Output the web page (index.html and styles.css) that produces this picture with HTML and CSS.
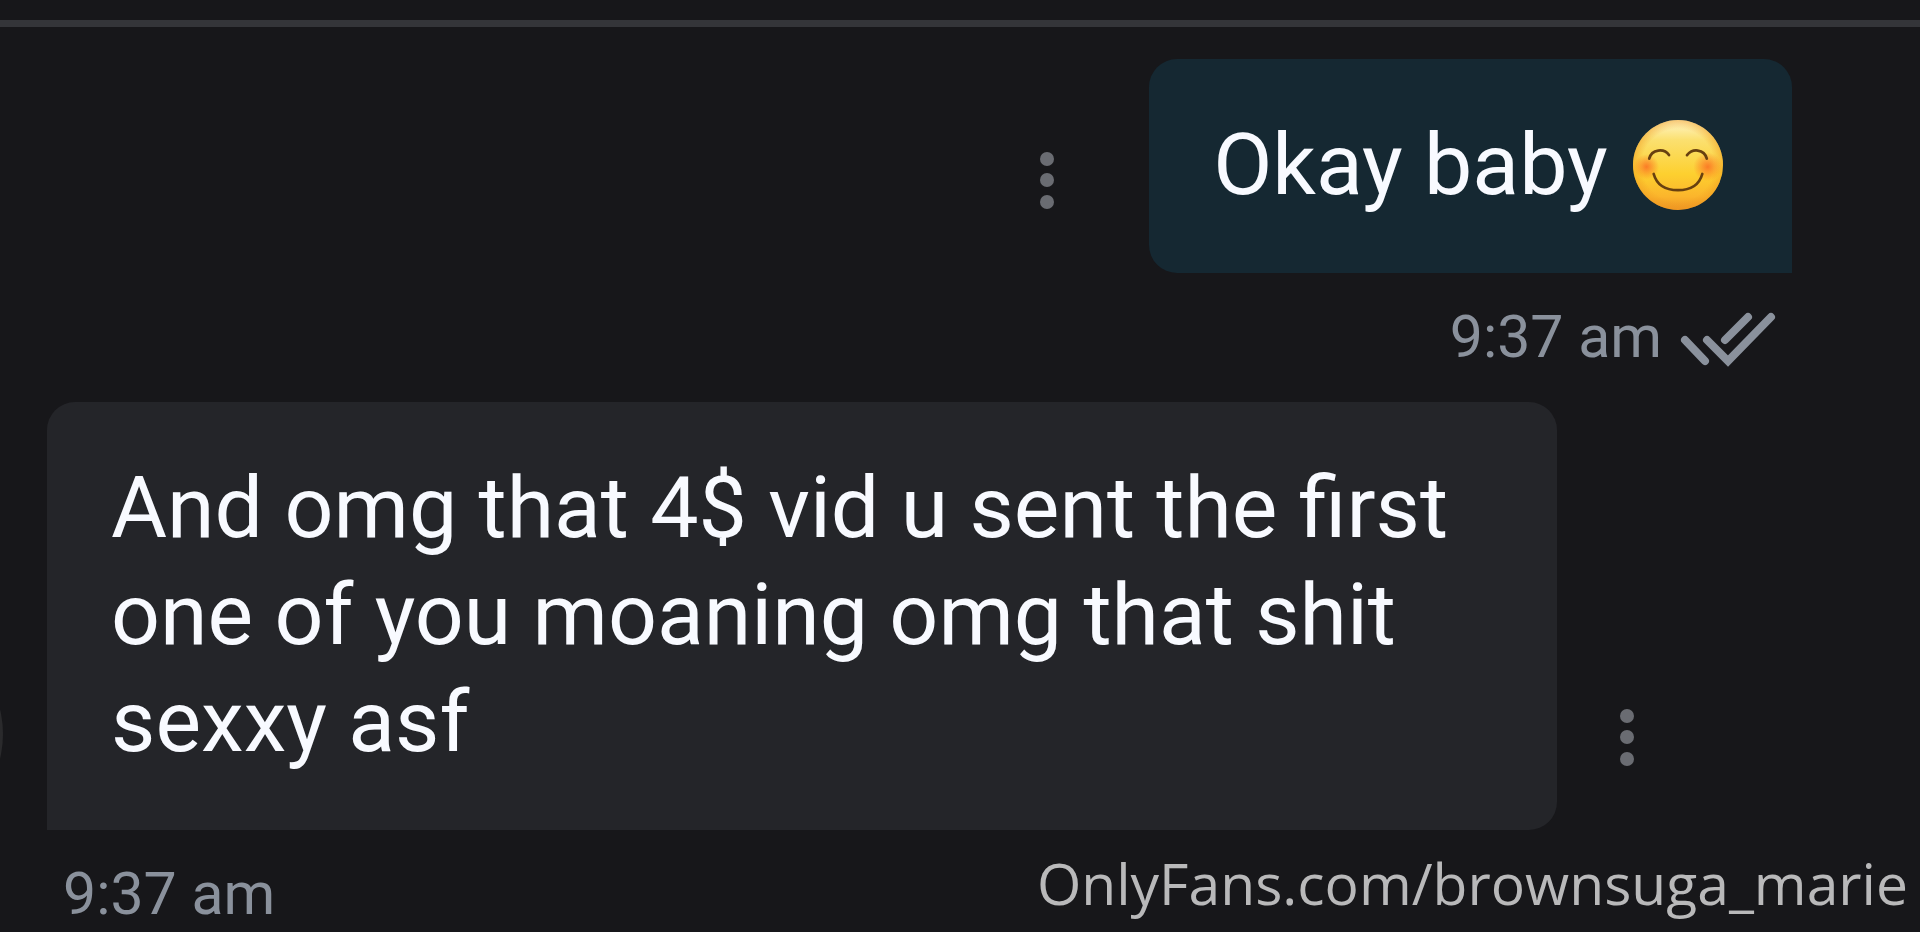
FILE: index.html
```
<!DOCTYPE html>
<html lang="en">
<head>
    <meta charset="UTF-8">
    <meta name="viewport" content="width=device-width, initial-scale=1.0">
    <title>Messages</title>
    <link rel="stylesheet" href="styles.css">
</head>
<body>
    <header class="topbar"></header>

    <main class="chat">
        <article class="message sent">
            <div class="row">
                <button class="menu" type="button" aria-label="Message options">
                    <svg viewBox="0 0 40 64"><circle cx="20" cy="11" r="7"/><circle cx="20" cy="32" r="7"/><circle cx="20" cy="54" r="7"/></svg>
                </button>
                <p class="bubble">Okay baby
                    <svg class="emoji" viewBox="0 0 100 100" role="img" aria-label="smiling face">
                        <defs>
                            <linearGradient id="face" x1="0" y1="0" x2="0" y2="1">
                                <stop offset="0" stop-color="#fff6cc"/>
                                <stop offset="0.22" stop-color="#fbe070"/>
                                <stop offset="0.6" stop-color="#fdd02f"/>
                                <stop offset="0.85" stop-color="#fbb52c"/>
                                <stop offset="1" stop-color="#ee9424"/>
                            </linearGradient>
                            <radialGradient id="edge">
                                <stop offset="0.8" stop-color="#f09a20" stop-opacity="0"/>
                                <stop offset="1" stop-color="#f09a20" stop-opacity="0.5"/>
                            </radialGradient>
                            <radialGradient id="cheek">
                                <stop offset="0" stop-color="#fb7324" stop-opacity="0.9"/>
                                <stop offset="1" stop-color="#fb7324" stop-opacity="0"/>
                            </radialGradient>
                        </defs>
                        <circle cx="50" cy="50" r="50" fill="url(#face)"/>
                        <circle cx="50" cy="50" r="50" fill="url(#edge)"/>
                        <circle cx="15" cy="52" r="14" fill="url(#cheek)"/>
                        <circle cx="83" cy="52" r="16" fill="url(#cheek)"/>
                        <g fill="none" stroke="#684010" stroke-width="3" stroke-linecap="round">
                            <path d="M18 43 Q20 35 28 34 Q36 33 40 39"/>
                            <path d="M60 39 Q65 33 72 34 Q80 35 82 43"/>
                            <path d="M23 60 Q28 78 50 78 Q72 78 77 60"/>
                        </g>
                    </svg>
                </p>
            </div>
            <div class="meta">
                <time>9:37 am</time>
                <svg class="ticks" viewBox="0 0 96 60" role="img" aria-label="Read">
                    <path d="M5 33 L25 54 M27 33 L48 54 L91 10 M68 10 L45 33"/>
                </svg>
            </div>
        </article>

        <article class="message received">
            <div class="row">
                <span class="avatar"></span>
                <p class="bubble">And omg that 4$ vid u sent the first one of you moaning omg that shit sexxy asf</p>
                <button class="menu" type="button" aria-label="Message options">
                    <svg viewBox="0 0 40 64"><circle cx="20" cy="11" r="7"/><circle cx="20" cy="32" r="7"/><circle cx="20" cy="54" r="7"/></svg>
                </button>
            </div>
            <div class="meta">
                <time>9:37 am</time>
            </div>
        </article>
    </main>

    <div class="watermark">OnlyFans.com/brownsuga_marie</div>
</body>
</html>
```
FILE: styles.css
```
* {
    box-sizing: border-box;
}
body {
    margin: 0;
    min-height: 100vh;
    position: relative;
    overflow: hidden;
    background-color: #17171a;
    color: #f8faff;
    font-family: Roboto, sans-serif;
}
.topbar {
    height: 27px;
    border-bottom: 7px solid #343539;
}
.chat {
    display: flex;
    flex-direction: column;
    gap: 31px;
    padding-top: 32px;
}
.message {
    display: flex;
    flex-direction: column;
    gap: 30px;
}
.sent {
    padding-right: 128px;
}
.received {
    padding-left: 47px;
    padding-right: 273px;
}
.row {
    display: flex;
    align-items: flex-end;
    position: relative;
}
.sent .row {
    justify-content: flex-end;
    gap: 82px;
}
.received .row {
    gap: 50px;
}
.bubble {
    margin: 0;
    padding: 52px 64px 55px;
    font-size: 86px;
    line-height: 107px;
}
.sent .bubble {
    background-color: #152832;
    border-radius: 28px 28px 0 28px;
}
.received .bubble {
    flex: 1;
    background-color: #242529;
    border-radius: 28px 28px 28px 0;
}
.emoji {
    width: 90px;
    height: 90px;
    margin: 0 5px 0 4px;
    vertical-align: -16px;
}
.menu {
    flex: none;
    width: 40px;
    height: 64px;
    margin: 0 0 61px;
    padding: 0;
    border: none;
    background: none;
    cursor: pointer;
}
.menu svg {
    display: block;
    width: 100%;
    fill: #6a6c72;
}
/* mostly scrolled off the left edge */
.avatar {
    position: absolute;
    left: -252px;
    bottom: -8px;
    width: 208px;
    height: 208px;
    border-radius: 50%;
    background-color: #2a2a2c;
}
.meta {
    display: flex;
    align-items: center;
    gap: 18px;
    color: #8a919c;
    font-size: 59px;
    line-height: 68px;
}
.sent .meta {
    justify-content: flex-end;
    padding-right: 16px;
}
.received .meta {
    padding-left: 16px;
}
.ticks {
    width: 96px;
    height: 60px;
    fill: none;
    stroke: #8a919c;
    stroke-width: 8px;
    stroke-linecap: round;
}
.watermark {
    position: absolute;
    right: 12px;
    bottom: 11px;
    color: #b9b9ba;
    font-family: "Open Sans", sans-serif;
    font-size: 57px;
    line-height: 76px;
}
```
